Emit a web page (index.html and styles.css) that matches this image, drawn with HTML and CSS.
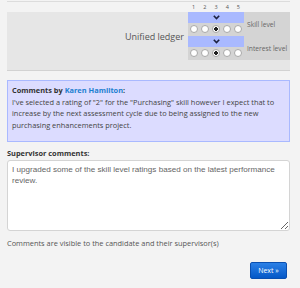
FILE: index.html
```html
<!DOCTYPE html>
<html lang="en">
<head>
  <meta charset="UTF-8">
  <title>Assessment review</title>
  <link rel="stylesheet" href="styles.css">
</head>
<body>
  <div class="page">
    <div class="rule"></div>

    <div class="scale-head">
      <div class="scale-nums">
        <span>1</span><span>2</span><span>3</span><span>4</span><span>5</span>
      </div>
    </div>

    <div class="skill-row">
      <div class="skill-name">Unified ledger</div>
      <div class="ratings">
        <div class="rating">
          <div class="rating-cells">
            <div class="expected">
              <svg width="7" height="5" viewBox="0 0 7 5"><path d="M0.8 0.8 L3.5 3.6 L6.2 0.8" fill="none" stroke="#1b2140" stroke-width="1.6"/></svg>
            </div>
            <div class="radios">
              <input type="radio" name="skill" value="1">
              <input type="radio" name="skill" value="2">
              <input type="radio" name="skill" value="3" checked>
              <input type="radio" name="skill" value="4">
              <input type="radio" name="skill" value="5">
            </div>
          </div>
          <div class="rating-label">Skill level</div>
        </div>
        <div class="rating">
          <div class="rating-cells">
            <div class="expected">
              <svg width="7" height="5" viewBox="0 0 7 5"><path d="M0.8 0.8 L3.5 3.6 L6.2 0.8" fill="none" stroke="#1b2140" stroke-width="1.6"/></svg>
            </div>
            <div class="radios">
              <input type="radio" name="interest" value="1">
              <input type="radio" name="interest" value="2">
              <input type="radio" name="interest" value="3" checked>
              <input type="radio" name="interest" value="4">
              <input type="radio" name="interest" value="5">
            </div>
          </div>
          <div class="rating-label">Interest level</div>
        </div>
      </div>
    </div>

    <div class="candidate-comment">
      <strong>Comments by <a href="#">Karen Hamilton</a>:</strong><br>
      I've selected a rating of "2" for the "Purchasing" skill however I expect that to increase by the next assessment cycle due to being assigned to the new purchasing enhancements project.
    </div>

    <label class="field-label" for="supervisorComments">Supervisor comments:</label>
    <textarea id="supervisorComments">I upgraded some of the skill level ratings based on the latest performance review.</textarea>

    <p class="hint">Comments are visible to the candidate and their supervisor(s)</p>

    <div class="actions">
      <button class="btn-next">Next &raquo;</button>
    </div>
  </div>
</body>
</html>
```

FILE: styles.css
```css
/* Base */
html {
  box-sizing: border-box;
}
*, *:before, *:after {
  box-sizing: inherit;
}
body {
  margin: 0;
  background-color: #f3f3f3;
  font-family: 'Open Sans', 'DejaVu Sans', sans-serif;
  font-size: 7.4px;
  color: #444;
}
.page {
  padding: 1px 10px 0 7px;
}
.rule {
  border-top: 1px solid #dcdcdc;
}

/* Rating scale header (1..5) */
.scale-head {
  display: flex;
  height: 10px;
  padding-left: 181px;
}
.scale-nums {
  display: flex;
  width: 56px;
  font-size: 5.5px;
  color: #555;
  line-height: 10px;
}
.scale-nums span {
  flex: 1;
  text-align: center;
}

/* Skill row */
.skill-row {
  display: flex;
  background-color: #e6e6e6;
  border-bottom: 1px solid #d2d2d2;
  padding-bottom: 10px;
}
.skill-name {
  flex: 1;
  display: flex;
  align-items: center;
  justify-content: flex-end;
  padding-right: 4px;
  font-size: 9px;
  color: #555;
}
.ratings {
  width: 102px;
  background-color: #d4d4d4;
}
.rating {
  display: flex;
  height: 24px;
}
.rating-cells {
  width: 56px;
}
.expected {
  height: 11px;
  background-color: #a9b9ff;
  display: flex;
  align-items: center;
  justify-content: center;
}
.expected svg {
  display: block;
}
.radios {
  display: flex;
  height: 12px;
  align-items: center;
}
.radios input {
  -webkit-appearance: none;
  appearance: none;
  flex: 1;
  height: 8px;
  max-width: 8px;
  margin: 0 1.6px;
  border: 1px solid #a8a8a8;
  border-radius: 50%;
  background: #fff;
}
.radios input:checked {
  background: radial-gradient(circle, #222 0, #222 1.6px, #fff 2px);
}
.rating-label {
  flex: 1;
  display: flex;
  align-items: center;
  padding-left: 3px;
  color: #666;
  font-size: 6.7px;
  white-space: nowrap;
}

/* Candidate comment box */
.candidate-comment {
  margin-top: 9px;
  padding: 4px 4px 9px;
  background-color: #dcdcff;
  border: 1px solid #a9b9ff;
  line-height: 11.7px;
  color: #444;
}
.candidate-comment strong {
  color: #333;
}
.candidate-comment a {
  color: #1b7fd0;
  text-decoration: none;
}

/* Supervisor comments */
.field-label {
  display: block;
  margin-top: 6px;
  font-weight: bold;
  color: #333;
  line-height: 11px;
}
textarea {
  display: block;
  width: 100%;
  height: 71px;
  margin-top: 1px;
  padding: 3px 4px;
  border: 1px solid #d4d4d4;
  border-radius: 3px;
  background: #fff;
  font-family: 'Liberation Sans', Arial, sans-serif;
  font-size: 8.1px;
  line-height: 11px;
  color: #666;
  resize: vertical;
}
.hint {
  margin: 7px 0 0;
  line-height: 11px;
  color: #555;
}

/* Actions */
.actions {
  display: flex;
  justify-content: flex-end;
  margin-top: 13px;
  padding-right: 3px;
}
.btn-next {
  width: 37px;
  height: 17px;
  padding: 0;
  border: 1px solid #0a4fb0;
  border-radius: 2px;
  background: linear-gradient(#2b80e6, #0558c7);
  color: #fff;
  font-family: 'Open Sans', sans-serif;
  font-size: 7px;
  cursor: pointer;
}
```
